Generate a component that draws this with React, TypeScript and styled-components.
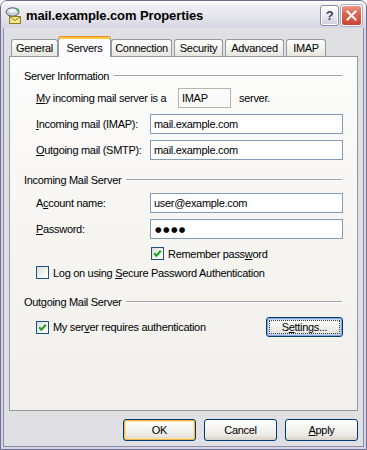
import styled, { createGlobalStyle } from 'styled-components';

const GlobalStyle = createGlobalStyle`
  html, body { margin: 0; padding: 0; background: #ffffff; }
  body {
    font-family: "Liberation Sans", Arial, sans-serif;
    font-size: 11px;
    letter-spacing: -0.3px;
    color: #000;
  }
  * { box-sizing: border-box; }
`;

const Window = styled.div`
  width: 367px;
  height: 450px;
  display: flex;
  flex-direction: column;
  border: 1px solid #6f6e92;
  border-radius: 7px 7px 0 0;
  background: #d6d5e1;
  overflow: hidden;
`;

const TitleBar = styled.div`
  height: 27px;
  flex: none;
  display: flex;
  align-items: center;
  gap: 4px;
  padding: 0 4px;
  background: linear-gradient(#ffffff 0%, #eeeef3 18%, #e4e4eb 60%, #d6d5e1 100%);
`;

const Title = styled.div`
  flex: 1;
  font-size: 13px;
  font-weight: bold;
  letter-spacing: -0.1px;
  color: #000;
  padding-top: 1px;
`;

const CaptionButton = styled.div<{ $close?: boolean; $w: number }>`
  width: ${p => p.$w}px;
  height: 21px;
  border-radius: 3px;
  display: flex;
  align-items: center;
  justify-content: center;
  border: 1px solid ${p => (p.$close ? '#ffffff' : '#8b8aa8')};
  background: ${p =>
    p.$close
      ? 'linear-gradient(#ec9a88 0%, #dc6a55 35%, #c9432f 100%)'
      : 'linear-gradient(#ffffff 0%, #ececf2 45%, #cfcedd 100%)'};
  box-shadow: ${p => (p.$close ? '0 0 0 1px #b0afc4' : 'inset 0 0 0 1px #ffffff')};
  color: #3d3c5c;
  font-weight: bold;
  font-size: 13px;
`;

const CaptionButtons = styled.div`
  display: flex;
  gap: 2px;
  margin-top: 1px;
`;

const Client = styled.div`
  flex: 1;
  margin: 0 2px 2px;
  border: 1px solid #8c8baa;
  border-top: none;
  background: #e0dfe3;
  display: flex;
  flex-direction: column;
  padding: 8px 5px 5px;
`;

const TabRow = styled.div`
  height: 20px;
  flex: none;
  display: flex;
  align-items: flex-end;
  padding-left: 2px;
`;

const Tab = styled.div<{ $active?: boolean; $w: number }>`
  position: relative;
  z-index: ${p => (p.$active ? 1 : 0)};
  width: ${p => (p.$active ? p.$w + 4 : p.$w)}px;
  height: ${p => (p.$active ? 21 : 17)}px;
  margin: 0 ${p => (p.$active ? 0 : 2)}px ${p => (p.$active ? -1 : 0)}px ${p => (p.$active ? -2 : 0)}px;
  display: flex;
  align-items: center;
  justify-content: center;
  border: 1px solid #919b9c;
  border-bottom: none;
  border-radius: 3px 3px 0 0;
  background: ${p =>
    p.$active ? '#fcfcfe' : 'linear-gradient(#ffffff 0%, #f3f3ef 50%, #e6e5df 100%)'};
  ${p =>
    p.$active &&
    `border-top: 1px solid #e68b2c; box-shadow: inset 0 2px 0 #ffc83c;`}
  padding-top: ${p => (p.$active ? 1 : 0)}px;
`;

const Panel = styled.div`
  flex: 1;
  border: 1px solid #919b9c;
  background: linear-gradient(#fcfcfc 0%, #f6f5f2 50%, #f1f0ec 100%);
  padding: 12px 14px 0;
  display: flex;
  flex-direction: column;
`;

const Group = styled.section<{ $top: number }>`
  margin-top: ${p => p.$top}px;
  display: flex;
  flex-direction: column;
`;

const GroupHeader = styled.div`
  height: 14px;
  display: flex;
  align-items: center;
  gap: 5px;
`;

const Rule = styled.div`
  flex: 1;
  height: 2px;
  border-top: 1px solid #a3a3a8;
  border-bottom: 1px solid #ffffff;
  margin-right: 1px;
`;

const Row = styled.div<{ $top: number; $h?: number }>`
  margin-top: ${p => p.$top}px;
  height: ${p => p.$h ?? 20}px;
  padding-left: 12px;
  display: flex;
  align-items: center;
`;

const FieldRow = styled(Row)`
  display: grid;
  grid-template-columns: 114px 1fr;
  align-items: center;
`;

const Label = styled.span<{ $w?: number }>`
  width: ${p => (p.$w ? `${p.$w}px` : 'auto')};
  flex: none;
  white-space: nowrap;
`;

const Key = styled.u`
  text-decoration: underline;
  text-underline-offset: 1px;
`;

const Field = styled.div`
  height: 20px;
  border: 1px solid #7f9db9;
  background: #ffffff;
  padding: 0 3px;
  display: flex;
  align-items: center;
`;

const StaticBox = styled.div`
  width: 53px;
  height: 20px;
  border: 1px solid #b5b4ad;
  padding: 0 3px;
  display: flex;
  align-items: center;
  margin-right: 8px;
`;

const Dots = styled.span`
  font-family: "DejaVu Sans", sans-serif;
  font-size: 7.5px;
  letter-spacing: 1.4px;
  padding-left: 1px;
`;

const Check = styled.span`
  width: 13px;
  height: 13px;
  flex: none;
  border: 1px solid #1c5180;
  background: linear-gradient(135deg, #dcdcd7 0%, #f4f4f1 60%, #ffffff 100%);
  display: flex;
  align-items: center;
  justify-content: center;
  margin-right: 4px;
`;

const CheckLine = styled.div<{ $indent?: number }>`
  display: flex;
  align-items: center;
  padding-left: ${p => p.$indent ?? 0}px;
  white-space: nowrap;
`;

const Spacer = styled.div`
  flex: 1;
`;

const Button = styled.button<{ $w: number; $h?: number; $default?: boolean; $focus?: boolean }>`
  width: ${p => p.$w}px;
  height: ${p => p.$h ?? 22}px;
  padding: 2px;
  font: inherit;
  letter-spacing: inherit;
  color: #000;
  border: 1px solid #003c74;
  border-radius: 3px;
  background: linear-gradient(#ffffff 0%, #f6f6f3 35%, #eceae4 75%, #d8d3c8 100%);
  box-shadow: ${p =>
    p.$default
      ? 'inset 0 0 0 1px #f7b649, inset 0 0 0 2px #fde3a3'
      : p.$focus
      ? 'inset 0 0 0 1px #8aa8e0, inset 0 0 0 2px #c4d4f4'
      : 'inset 0 -1px 0 #dcd7cc'};
  display: flex;
  align-items: stretch;
  justify-content: stretch;
`;

const ButtonFace = styled.span<{ $focus?: boolean }>`
  flex: 1;
  display: flex;
  align-items: center;
  justify-content: center;
  border: 1px dotted ${p => (p.$focus ? '#3a3a3a' : 'transparent')};
`;

const Footer = styled.div`
  margin-top: 8px;
  display: flex;
  justify-content: flex-end;
  gap: 8px;
`;

function CheckMark() {
  return (
    <svg width="11" height="11" viewBox="0 0 11 11">
      <polyline points="2.2,5.2 4.4,7.6 8.8,2.8" fill="none" stroke="#21a121" strokeWidth="2.1" />
    </svg>
  );
}

function MailIcon() {
  return (
    <svg width="17" height="18" viewBox="0 0 17 18">
      <ellipse cx="7.5" cy="6" rx="6.5" ry="4.2" fill="#c9ccd4" stroke="#555a68" />
      <ellipse cx="7.5" cy="4.8" rx="4.5" ry="2" fill="#eef0f4" />
      <circle cx="12.6" cy="3.8" r="1.3" fill="#2fb24a" />
      <rect x="4.5" y="10.5" width="11" height="7" fill="#f6e882" stroke="#8c7a2c" />
      <polyline points="4.5,10.5 10,14.6 15.5,10.5" fill="none" stroke="#8c7a2c" />
    </svg>
  );
}

function CloseGlyph() {
  return (
    <svg width="11" height="11" viewBox="0 0 11 11">
      <path d="M1.5 1.5 L9.5 9.5 M9.5 1.5 L1.5 9.5" stroke="#ffffff" strokeWidth="2" strokeLinecap="square" />
    </svg>
  );
}

const tabs = [
  { label: 'General', w: 47 },
  { label: 'Servers', w: 49, active: true },
  { label: 'Connection', w: 61 },
  { label: 'Security', w: 49 },
  { label: 'Advanced', w: 59 },
  { label: 'IMAP', w: 40 },
];

export default function App() {
  return (
    <>
      <GlobalStyle />
      <Window>
        <TitleBar>
          <MailIcon />
          <Title>mail.example.com Properties</Title>
          <CaptionButtons>
            <CaptionButton $w={19}>?</CaptionButton>
            <CaptionButton $w={21} $close>
              <CloseGlyph />
            </CaptionButton>
          </CaptionButtons>
        </TitleBar>

        <Client>
          <TabRow>
            {tabs.map(t => (
              <Tab key={t.label} $w={t.w} $active={t.active}>
                {t.label}
              </Tab>
            ))}
          </TabRow>

          <Panel>
            <Group $top={0}>
              <GroupHeader>
                <Label>Server Information</Label>
                <Rule />
              </GroupHeader>
              <Row $top={5}>
                <Label $w={142}>
                  <Key>M</Key>y incoming mail server is a
                </Label>
                <StaticBox>IMAP</StaticBox>
                <Label>server.</Label>
              </Row>
              <FieldRow $top={6}>
                <Label>
                  <Key>I</Key>ncoming mail (IMAP):
                </Label>
                <Field>mail.example.com</Field>
              </FieldRow>
              <FieldRow $top={6}>
                <Label>
                  <Key>O</Key>utgoing mail (SMTP):
                </Label>
                <Field>mail.example.com</Field>
              </FieldRow>
            </Group>

            <Group $top={13}>
              <GroupHeader>
                <Label>Incoming Mail Server</Label>
                <Rule />
              </GroupHeader>
              <FieldRow $top={6}>
                <Label>
                  A<Key>c</Key>count name:
                </Label>
                <Field>user@example.com</Field>
              </FieldRow>
              <FieldRow $top={6}>
                <Label>
                  <Key>P</Key>assword:
                </Label>
                <Field>
                  <Dots>●●●●</Dots>
                </Field>
              </FieldRow>
              <Row $top={7} $h={15}>
                <CheckLine $indent={115}>
                  <Check>
                    <CheckMark />
                  </Check>
                  <Label>
                    Remember pass<Key>w</Key>ord
                  </Label>
                </CheckLine>
              </Row>
              <Row $top={4} $h={15}>
                <CheckLine>
                  <Check />
                  <Label>
                    Log on using <Key>S</Key>ecure Password Authentication
                  </Label>
                </CheckLine>
              </Row>
            </Group>

            <Group $top={15}>
              <GroupHeader>
                <Label>Outgoing Mail Server</Label>
                <Rule />
              </GroupHeader>
              <Row $top={8}>
                <CheckLine>
                  <Check>
                    <CheckMark />
                  </Check>
                  <Label>
                    My ser<Key>v</Key>er requires authentication
                  </Label>
                </CheckLine>
                <Spacer />
                <Button $w={77} $h={20} $focus>
                  <ButtonFace $focus>
                    <span>
                      S<Key>e</Key>ttings...
                    </span>
                  </ButtonFace>
                </Button>
              </Row>
            </Group>
          </Panel>

          <Footer>
            <Button $w={73} $default>
              <ButtonFace>OK</ButtonFace>
            </Button>
            <Button $w={73}>
              <ButtonFace>Cancel</ButtonFace>
            </Button>
            <Button $w={73}>
              <ButtonFace>
                <span>
                  <Key>A</Key>pply
                </span>
              </ButtonFace>
            </Button>
          </Footer>
        </Client>
      </Window>
    </>
  );
}
